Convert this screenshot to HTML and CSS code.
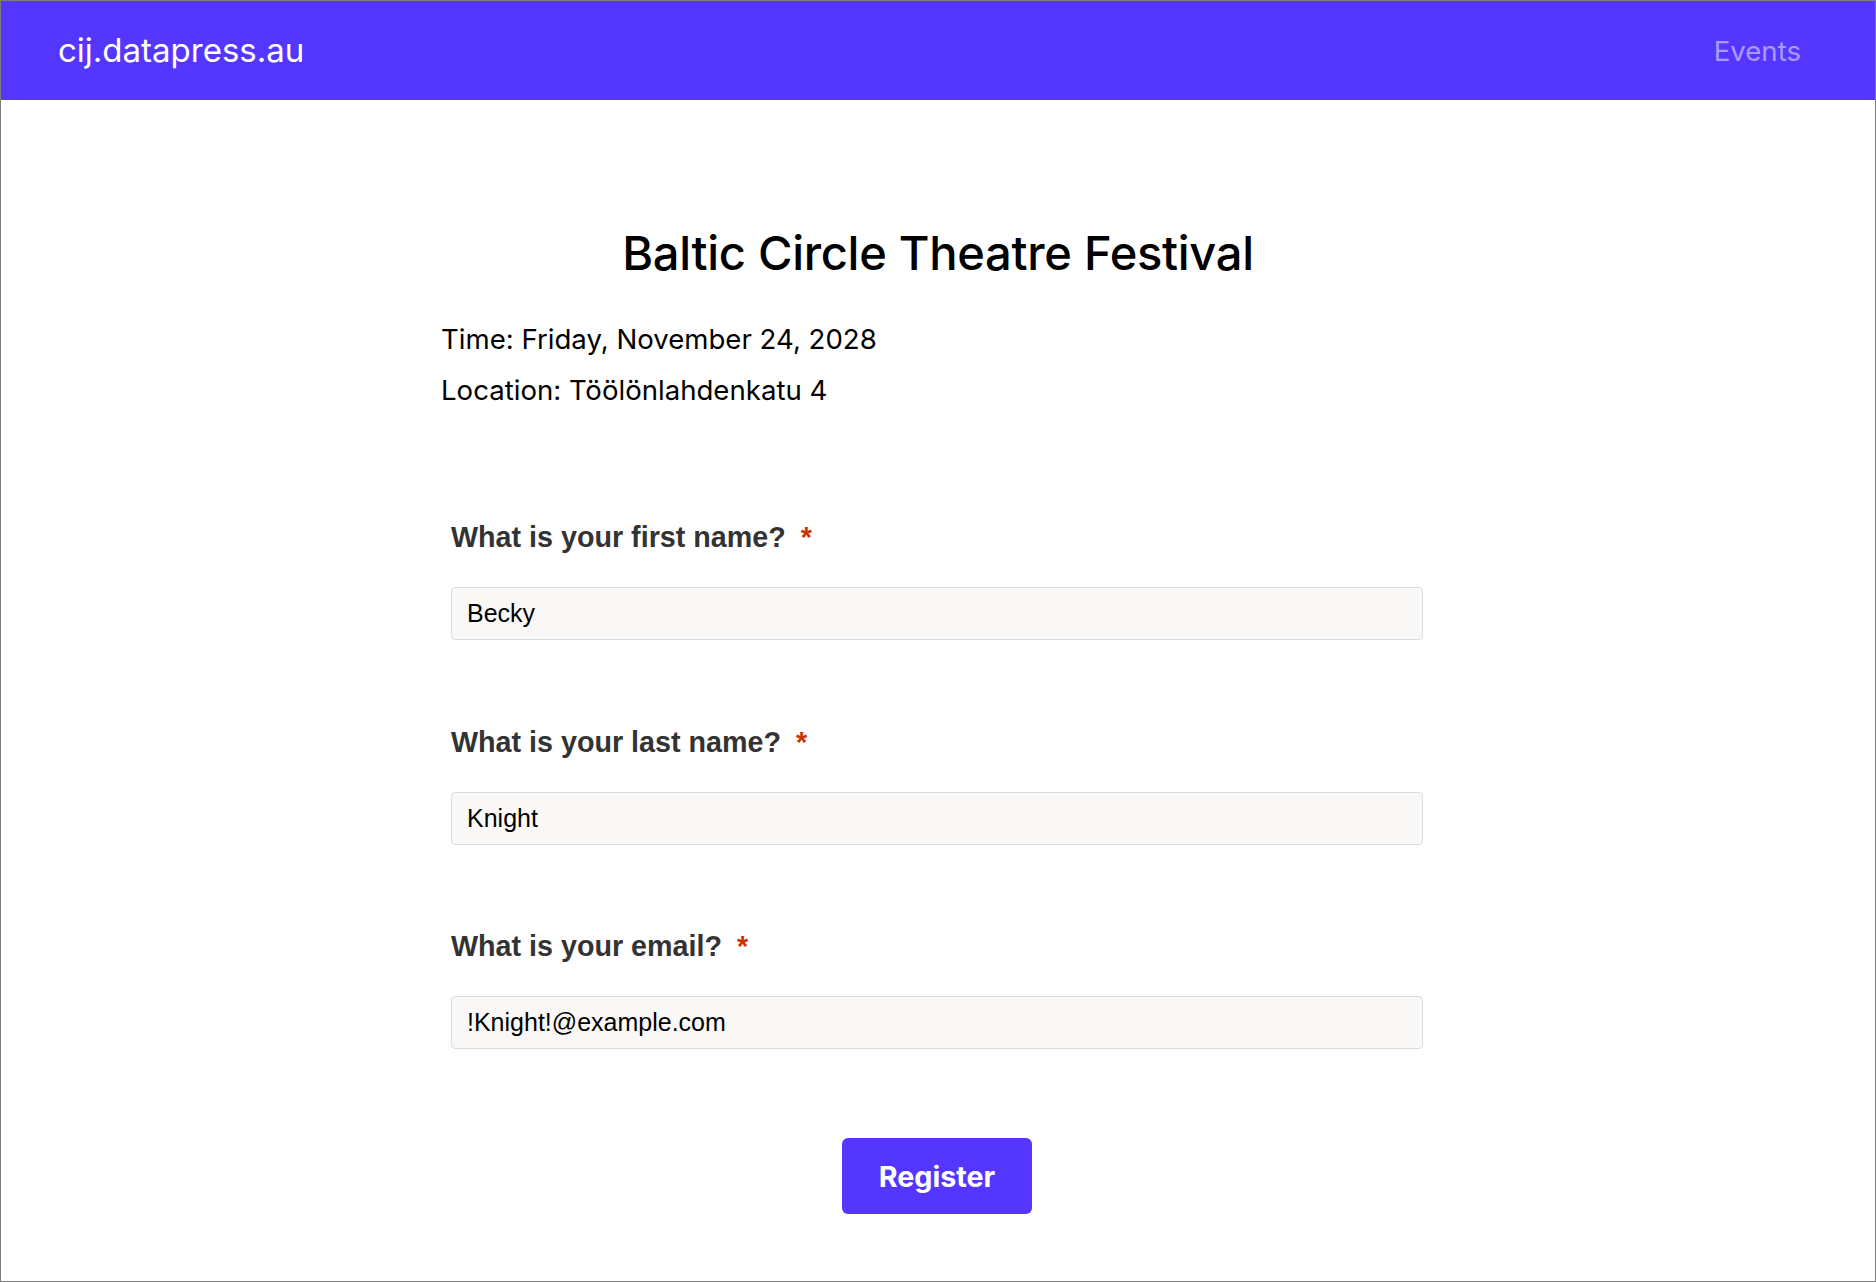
FILE: index.html
```html
<!DOCTYPE html>
<html lang="en">
<head>
<meta charset="utf-8">
<title>Baltic Circle Theatre Festival</title>
<link rel="stylesheet" href="styles.css">
</head>
<body>
<div class="page">
  <header class="topbar">
    <a class="brand" href="#">cij.datapress.au</a>
    <nav class="nav"><a class="nav-link" href="#">Events</a></nav>
  </header>
  <main class="main">
    <div class="container">
      <h1 class="title">Baltic Circle Theatre Festival</h1>
      <p class="meta meta-time">Time: Friday, November 24, 2028</p>
      <p class="meta meta-loc">Location: Töölönlahdenkatu 4</p>
      <form class="form">
        <div class="field">
          <label class="label" for="first">What is your first name?<span class="req">*</span></label>
          <input class="input" id="first" type="text" value="Becky">
        </div>
        <div class="field">
          <label class="label" for="last">What is your last name?<span class="req">*</span></label>
          <input class="input" id="last" type="text" value="Knight">
        </div>
        <div class="field">
          <label class="label" for="email">What is your email?<span class="req">*</span></label>
          <input class="input" id="email" type="text" value="!Knight!@example.com">
        </div>
        <div class="actions">
          <button class="btn" type="button">Register</button>
        </div>
      </form>
    </div>
  </main>
</div>
</body>
</html>
```
FILE: styles.css
```css
* { box-sizing: border-box; }
html, body { margin: 0; padding: 0; background: #ffffff; }
body { font-family: Inter, "Liberation Sans", sans-serif; color: #000; }

.page {
  min-height: 100vh;
  border: 1px solid #7d7d7d;
  display: flex;
  flex-direction: column;
}

.topbar {
  height: 99px;
  background: #5536ff;
  display: flex;
  align-items: center;
  justify-content: space-between;
  padding: 0 74px 0 57px;
}
.brand {
  color: #ffffff;
  text-decoration: none;
  font-size: 33px;
  line-height: 40px;
  padding-bottom: 1px;
}
.nav-link {
  color: rgba(255, 255, 255, 0.5);
  text-decoration: none;
  font-size: 27.6px;
  line-height: 36px;
  padding-bottom: 6px;
}

.main { flex: 1; }
.container {
  width: 994px;
  margin: 0 auto;
  padding-top: 124px;
}
.title {
  margin: 0;
  text-align: center;
  font-size: 47.1px;
  line-height: 58px;
  font-weight: 500;
  letter-spacing: -0.3px;
}
.meta {
  margin: 0;
  font-size: 27.6px;
  line-height: 35px;
}
.meta-time { margin-top: 40px; }
.meta-loc { margin-top: 16px; }

.form {
  padding: 0 12px 0 10px;
  margin-top: 112px;
}
.field { margin-bottom: 84.5px; }
.field:last-of-type { margin-bottom: 0; }
.label {
  display: block;
  font-family: "Liberation Sans", Arial, sans-serif;
  font-weight: 700;
  font-size: 28.7px;
  line-height: 34px;
  color: #333333;
}
.req {
  color: #cc3300;
  padding-left: 15px;
}
.input {
  display: block;
  width: 100%;
  height: 53px;
  margin-top: 33px;
  padding: 0 15px;
  border: 1px solid #dcdcdc;
  border-radius: 4px;
  background: #f9f8f7;
  font-family: "Liberation Sans", Arial, sans-serif;
  font-size: 25px;
  color: #000;
  outline: none;
}

.actions {
  display: flex;
  justify-content: center;
  margin-top: 89px;
  padding-bottom: 40px;
}
.btn {
  height: 76px;
  padding: 0 37px;
  border: none;
  border-radius: 6px;
  background: #5536ff;
  color: #ffffff;
  font-family: Inter, "Liberation Sans", sans-serif;
  font-weight: 700;
  font-size: 28.7px;
  cursor: pointer;
}
```
